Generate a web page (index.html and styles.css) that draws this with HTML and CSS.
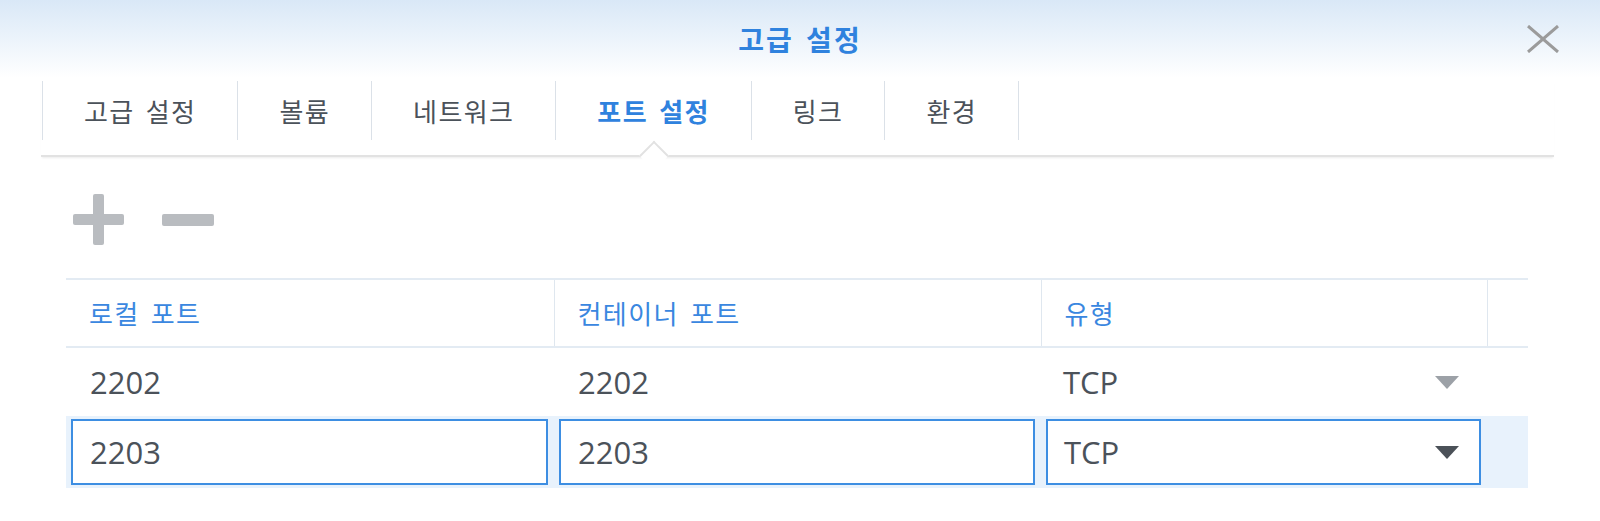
FILE: index.html
```html
<!DOCTYPE html>
<html lang="ko">
<head>
  <meta charset="UTF-8" />
  <meta name="viewport" content="width=device-width, initial-scale=1" />
  <title>고급 설정</title>
  <link rel="stylesheet" href="styles.css">
</head>
<body>
  <div class="dialog">
    <header class="title-bar">
      <h1>고급 설정</h1>
      <button class="close" type="button" aria-label="닫기">
        <svg width="32" height="28" viewBox="0 0 32 28"><path d="M1 1 L31 27 M31 1 L1 27" stroke="#9b9b9b" stroke-width="3" fill="none"/></svg>
      </button>
    </header>

    <nav class="tabs">
      <div class="tab">고급 설정</div>
      <div class="tab">볼륨</div>
      <div class="tab">네트워크</div>
      <div class="tab active">포트 설정</div>
      <div class="tab">링크</div>
      <div class="tab">환경</div>
    </nav>

    <div class="content">
      <div class="toolbar">
        <button type="button" class="tool" aria-label="추가">
          <svg width="51" height="51" viewBox="0 0 51 51"><rect x="0" y="20" width="51" height="11" rx="2"/><rect x="20" y="0" width="11" height="51" rx="2"/></svg>
        </button>
        <button type="button" class="tool" aria-label="삭제">
          <svg width="52" height="51" viewBox="0 0 52 51"><rect x="0" y="20" width="52" height="12" rx="2"/></svg>
        </button>
      </div>

      <table class="ports">
        <colgroup>
          <col style="width:488px">
          <col style="width:487px">
          <col style="width:446px">
          <col>
        </colgroup>
        <thead>
          <tr>
            <th>로컬 포트</th>
            <th>컨테이너 포트</th>
            <th>유형</th>
            <th></th>
          </tr>
        </thead>
        <tbody>
          <tr class="row">
            <td>2202</td>
            <td>2202</td>
            <td>
              <div class="select-view">
                <span>TCP</span>
                <svg width="24" height="13" viewBox="0 0 24 13"><polygon points="0,0 24,0 12,13" fill="#9ca1a7"/></svg>
              </div>
            </td>
            <td></td>
          </tr>
          <tr class="row editing">
            <td><input type="text" value="2203"></td>
            <td><input type="text" value="2203"></td>
            <td>
              <div class="select">
                <span>TCP</span>
                <svg width="24" height="13" viewBox="0 0 24 13"><polygon points="0,0 24,0 12,13" fill="#4b5158"/></svg>
              </div>
            </td>
            <td></td>
          </tr>
        </tbody>
      </table>
    </div>
  </div>
</body>
</html>
```

FILE: styles.css
```css
body {
  margin: 0;
  font-family: "Open Sans", "Noto Sans CJK KR", sans-serif;
  background: #fff;
  color: #4b525a;
}
.title-bar {
  position: relative;
  height: 78px;
  display: flex;
  align-items: center;
  justify-content: center;
  background: linear-gradient(#d9e8f7, #fff);
}
.title-bar h1 {
  margin: 0;
  font-size: 28px;
  font-weight: 700;
  letter-spacing: 2px;
  word-spacing: 3px;
  color: #2f82de;
}
.close {
  position: absolute;
  top: 25px;
  right: 41px;
  padding: 0;
  border: none;
  background: none;
  line-height: 0;
}
.tabs {
  display: flex;
  margin: 3px 46px 0 41px;
  padding-bottom: 15px;
  border-bottom: 2px solid #e2e2e2;
  box-shadow: 0 2px 2px -1px rgba(0,0,0,0.08);
}
.tab {
  position: relative;
  height: 59px;
  padding: 0 41px;
  display: flex;
  align-items: center;
  border-left: 1px solid #dbe1e8;
  font-size: 26px;
  letter-spacing: 1.4px;
  word-spacing: 3px;
  color: #4b525a;
}
.tab:first-child { margin-left: 1px; }
.tab:last-child { border-right: 1px solid #dbe1e8; }
.tab.active {
  color: #2f82de;
  font-weight: 700;
}
.tab.active::after {
  content: "";
  position: absolute;
  left: 50%;
  bottom: -26px;
  width: 19px;
  height: 19px;
  background: #fff;
  border-top: 2px solid #e2e2e2;
  border-left: 2px solid #e2e2e2;
  transform: translateX(-50%) rotate(45deg);
}
.content {
  padding: 0 72px 0 66px;
}
.toolbar {
  display: flex;
  gap: 38px;
  margin: 37px 0 0 7px;
}
.tool {
  padding: 0;
  border: none;
  background: none;
  line-height: 0;
  fill: #b9bcc0;
}
.ports {
  width: 1462px;
  margin-top: 33px;
  border-collapse: collapse;
  table-layout: fixed;
  border-top: 2px solid #e3ebf3;
}
.ports th {
  height: 66px;
  padding: 0 0 0 23px;
  text-align: left;
  font-size: 26px;
  font-weight: 400;
  letter-spacing: 1.4px;
  word-spacing: 3px;
  color: #3a87e0;
  border-left: 1px solid #dfe7ef;
  border-bottom: 2px solid #e3ebf3;
}
.ports th:first-child { border-left: none; }
.row td {
  height: 68px;
  padding: 0 0 0 24px;
  font-size: 31px;
}
.row td:nth-child(3) { padding: 0 28px 0 22px; }
.select-view, .select {
  display: flex;
  align-items: center;
  justify-content: space-between;
}
.editing {
  background: #e8f2fc;
}
.editing td,
.editing td:nth-child(3) {
  height: 66px;
  padding: 3px 6px 3px 5px;
}
.editing input,
.editing .select {
  display: flex;
  width: 100%;
  height: 66px;
  box-sizing: border-box;
  border: 2px solid #3d8ee2;
  background: #fff;
  font: inherit;
  color: #4b525a;
  outline: none;
}
.editing input { padding: 0 0 0 17px; }
.editing .select { padding: 0 20px 0 16px; }
```
